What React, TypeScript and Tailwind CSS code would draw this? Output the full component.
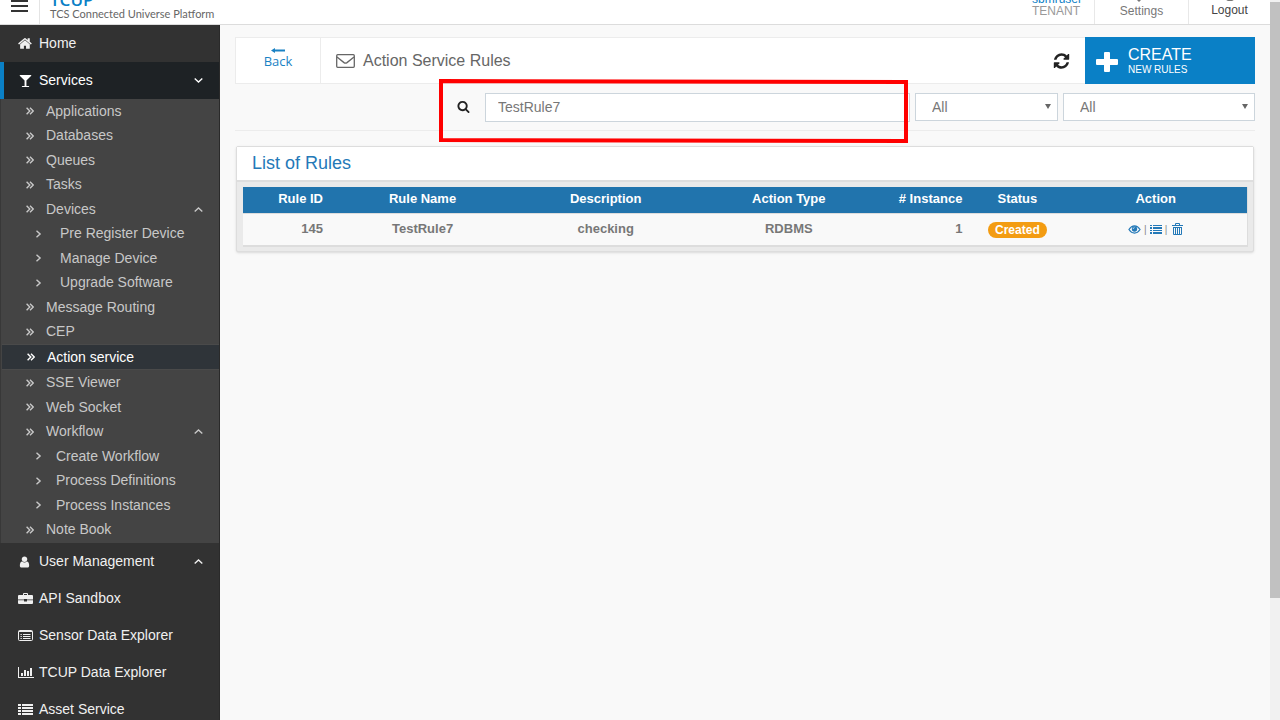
import React from "react";
import clsx from "clsx";

// Font Awesome 4 outlines, all on the 1792 grid
const HOME =
  "M1408 992v480q0 26-19 45t-45 19h-384v-384h-256v384h-384q-26 0-45-19t-19-45v-480q0-1 .5-3t.5-3l575-474 575 474q1 2 1 6zm223-69l-62 74q-8 9-21 11h-3q-13 0-21-7l-692-577-692 577q-12 8-24 7-13-2-21-11l-62-74q-8-10-7-23.5t11-21.5l719-599q32-26 76-26t76 26l244 204v-195q0-14 9-23t23-9h192q14 0 23 9t9 23v408l219 182q10 8 11 21.5t-7 23.5z";
const GLASS =
  "M1699 186q0 35-43 78l-632 632v768h320q26 0 45 19t19 45-19 45-45 19h-896q-26 0-45-19t-19-45 19-45 45-19h320v-768l-632-632q-43-43-43-78 0-23 18-36.5t38-17.5 43-4h1408q23 0 43 4t38 17.5 18 36.5z";
const USER =
  "M1536 1399q0 109-62.5 187t-150.5 78h-854q-88 0-150.5-78t-62.5-187q0-85 8.5-160.5t31.5-152 58.5-131 94-89 134.5-34.5q131 128 313 128t313-128q76 0 134.5 34.5t94 89 58.5 131 31.5 152 8.5 160.5zm-256-887q0 159-112.5 271.5t-271.5 112.5-271.5-112.5-112.5-271.5 112.5-271.5 271.5-112.5 271.5 112.5 112.5 271.5z";
const REFRESH =
  "M1639 1056q0 5-1 7-64 268-268 434.5t-478 166.5q-146 0-282.5-55t-243.5-157l-129 129q-19 19-45 19t-45-19-19-45v-448q0-26 19-45t45-19h448q26 0 45 19t19 45-19 45l-137 137q71 66 161 102t187 36q134 0 250-65t186-179q11-17 53-117 8-23 30-23h192q13 0 22.5 9.5t9.5 22.5zm25-800v448q0 26-19 45t-45 19h-448q-26 0-45-19t-19-45 19-45l138-138q-148-137-349-137-134 0-250 65t-186 179q-11 17-53 117-8 23-30 23h-199q-13 0-22.5-9.5t-9.5-22.5v-7q65-268 270-434.5t480-166.5q146 0 284 55.5t245 156.5l130-129q19-19 45-19t45 19 19 45z";
const SEARCH =
  "M1216 832q0-185-131.5-316.5t-316.5-131.5-316.5 131.5-131.5 316.5 131.5 316.5 316.5 131.5 316.5-131.5 131.5-316.5zm512 832q0 52-38 90t-90 38q-54 0-90-38l-343-342q-179 124-399 124-143 0-273.5-55.5t-225-150-150-225-55.5-273.5 55.5-273.5 150-225 225-150 273.5-55.5 273.5 55.5 225 150 150 225 55.5 273.5q0 220-124 399l343 343q37 37 37 90z";

function Fa({ d, className }: { d: string; className?: string }) {
  return (
    <svg viewBox="0 0 1792 1792" fill="currentColor" className={className} aria-hidden="true">
      <path d={d} />
    </svg>
  );
}

function Chevron({ up }: { up?: boolean }) {
  return (
    <svg viewBox="0 0 9 5" fill="none" stroke="currentColor" strokeWidth="1.4" className="w-[9px] h-[5px]" aria-hidden="true">
      <path d={up ? "M.7 4.4 4.5 1l3.8 3.4" : "M.7.6 4.5 4 8.3.6"} />
    </svg>
  );
}

function ListIcon({ className }: { className?: string }) {
  return (
    <svg viewBox="0 0 15 11" fill="currentColor" className={className} aria-hidden="true">
      <path d="M0 0h3v2H0zM4 0h11v2H4zM0 3h3v2H0zM4 3h11v2H4zM0 6h3v2H0zM4 6h11v2H4zM0 9h3v2H0zM4 9h11v2H4z" />
    </svg>
  );
}

const serviceItems = [
  { label: "Applications" },
  { label: "Databases" },
  { label: "Queues" },
  { label: "Tasks" },
  { label: "Devices", open: true },
  { label: "Pre Register Device", pad: "gap-[18px]" },
  { label: "Manage Device", pad: "gap-[18px]" },
  { label: "Upgrade Software", pad: "gap-[18px]" },
  { label: "Message Routing" },
  { label: "CEP" },
  { label: "Action service", active: true },
  { label: "SSE Viewer" },
  { label: "Web Socket" },
  { label: "Workflow", open: true },
  { label: "Create Workflow", pad: "gap-[14px]" },
  { label: "Process Definitions", pad: "gap-[14px]" },
  { label: "Process Instances", pad: "gap-[14px]" },
  { label: "Note Book" },
];

const bottomItems = [
  { label: "User Management", open: true, icon: <Fa d={USER} className="w-[13px] h-[14px]" /> },
  {
    label: "API Sandbox",
    icon: (
      <svg viewBox="0 0 15 12" className="w-[15px] h-3" aria-hidden="true">
        <path fill="currentColor" fillRule="evenodd" d="M5 2V1q0-1 1-1h3q1 0 1 1v1h4q1 0 1 1v3.5H9V6H6v.5H0V3q0-1 1-1zM6 1v1h3V1zM0 7.3h6V8.6h3V7.3h6V10q0 1-1 1H1q-1 0-1-1z" />
      </svg>
    ),
  },
  {
    label: "Sensor Data Explorer",
    icon: (
      <svg viewBox="0 0 15 11" fill="none" stroke="currentColor" className="w-[15px] h-[11px]" aria-hidden="true">
        <rect x=".5" y=".5" width="14" height="10" rx="1" />
        <path d="M1 1.5h13M2.5 4.5h1.3M2.5 6.5h1.3M2.5 8.5h1.3M5 4.5h7.5M5 6.5h7.5M5 8.5h7.5" />
      </svg>
    ),
  },
  {
    label: "TCUP Data Explorer",
    icon: (
      <svg viewBox="0 0 16 11" fill="currentColor" className="w-4 h-[11px]" aria-hidden="true">
        <path d="M0 0h1v10h15v1H0zM3 6h2v3H3zM6 3h2v6H6zM9 4h2v5H9zM12 1h2v8h-2z" />
      </svg>
    ),
  },
  { label: "Asset Service", icon: <ListIcon className="w-[15px] h-[11px]" /> },
];

function Header() {
  return (
    <header className="relative z-10 flex items-end justify-between h-[25px] shrink-0 overflow-hidden bg-white border-b border-[#dcdcdc]">
      <div className="flex items-end h-full">
        <button aria-label="Toggle menu" className="flex items-start justify-center w-[39px] h-full">
          <svg viewBox="0 0 17 12" className="w-[17px] h-3" aria-hidden="true">
            <path d="M0 1h17M0 6h17M0 11h17" stroke="#333" strokeWidth="2" />
          </svg>
        </button>
        <a href="#" className="flex flex-col justify-end h-full pl-[10px] pb-1 border-l border-[#e4e4e4]">
          <span className="text-[17px] leading-4 font-semibold text-[#0a80c6] font-['Open_Sans',sans-serif]">TCUP</span>
          <span className="text-[11px] leading-3 text-[#666] font-[Lato,sans-serif]">TCS Connected Universe Platform</span>
        </a>
      </div>
      <nav className="flex h-full text-[12px] leading-3">
        <a href="#" className="flex flex-col justify-end pr-3 pb-[7px] text-[#999]">
          <span className="text-[#0a80c6]">sbmruser</span>
          <span>TENANT</span>
        </a>
        <a href="#" className="flex flex-col items-center justify-end w-[94px] pb-[7px] border-l border-[#e8e8e8] text-[#777]">
          <svg viewBox="0 0 12 12" className="w-3 h-3 shrink-0 mb-[3px]" aria-hidden="true">
            <path d="M10 1 7 4l2 2 2-2c1 3-1 5-4 4L3 12 1 10l4-4C4 3 6 1 10 1z" fill="currentColor" />
          </svg>
          <span>Settings</span>
        </a>
        <a href="#" className="flex flex-col items-center justify-end w-[82px] pb-2 border-l border-[#e8e8e8] text-[#444]">
          <svg viewBox="0 0 12 12" fill="none" stroke="#777" strokeWidth="2" className="w-3 h-3 shrink-0 mb-[3px]" aria-hidden="true">
            <path d="M3.5 2a5 5 0 1 0 5 0M6 0v5" />
          </svg>
          <span>Logout</span>
        </a>
      </nav>
    </header>
  );
}

function Sidebar() {
  return (
    <aside className="w-[220px] shrink-0 overflow-hidden bg-[#323232] border-r border-[#2a2a2a] text-[14px] text-[#f0f0f0]">
      <a href="#" className="flex items-center gap-[6px] h-[37px] pl-[18px]">
        <Fa d={HOME} className="w-[15px] h-[15px]" />
        Home
      </a>
      <a href="#" className="flex items-center gap-[6px] h-[37px] pl-[14px] pr-4 border-l-4 border-[#0a80c6] bg-[#1e2225] text-white">
        <Fa d={GLASS} className="w-[15px] h-[13px]" />
        <span className="flex-1">Services</span>
        <Chevron />
      </a>
      <ul className="pb-px bg-[#444] border-l border-[#383838] text-[#c8c8c8]">
        {serviceItems.map((item) => (
          <li
            key={item.label}
            className={clsx(
              item.active ? "h-[26px] ml-px bg-[#2f3439] border-y border-[#4a4a4a] text-white" : "odd:h-6 even:h-[25px]"
            )}
          >
            <a href="#" className={clsx("flex items-center h-full pr-4", item.pad ? ["pl-[34px]", item.pad] : "pl-[25px] gap-3")}>
              {item.pad ? (
                <svg viewBox="0 0 7 8" fill="none" stroke="currentColor" strokeWidth="1.4" className="w-[7px] h-2" aria-hidden="true">
                  <path d="m1.5.8 3.6 3.2-3.6 3.2" />
                </svg>
              ) : (
                <svg viewBox="0 0 8 8" fill="none" stroke="currentColor" strokeWidth="1.4" className="w-2 h-2" aria-hidden="true">
                  <path d="m.6.8 3.2 3.2L.6 7.2M4 .8l3.2 3.2L4 7.2" />
                </svg>
              )}
              <span className="flex-1">{item.label}</span>
              {item.open && <Chevron up />}
            </a>
          </li>
        ))}
      </ul>
      {bottomItems.map((item) => (
        <a key={item.label} href="#" className="flex items-center gap-[5px] h-[37px] pl-[18px] pr-4">
          <span className="w-4">{item.icon}</span>
          <span className="flex-1">{item.label}</span>
          {item.open && <Chevron up />}
        </a>
      ))}
    </aside>
  );
}

function FilterSelect({ label, className }: { label: string; className: string }) {
  return (
    <div className={clsx("relative", className)}>
      <select aria-label={label} className="appearance-none w-full h-7 px-4 bg-white border border-[#ccd5dc] text-[14px] text-[#777]">
        <option>All</option>
      </select>
      <svg viewBox="0 0 6 5" className="absolute right-[7px] top-[11px] w-[6px] h-[5px] pointer-events-none" aria-hidden="true">
        <path d="M0 0h6L3 5z" fill="#666" />
      </svg>
    </div>
  );
}

function RulesTable() {
  return (
    <section className="mx-px mt-[15px] bg-[#eaeaea] border border-[#ddd] rounded-[2px] shadow-sm">
      <h2 className="h-[35px] px-[15px] bg-white border-b-2 border-[#dedede] text-[18px] leading-8 text-[#2479b8]">List of Rules</h2>
      <div className="p-[5px] pl-[6px] pb-1">
        <table className="w-full table-fixed bg-[#f9f9f9] border-r border-b-2 border-[#ddd] text-[13px] font-bold text-center text-[#777]">
          <thead className="bg-[#2174ad] text-white">
            <tr className="h-[26px] *:pb-[2px]">
              <th className="w-[88px] pr-2 text-right">Rule ID</th>
              <th>Rule Name</th>
              <th>Description</th>
              <th>Action Type</th>
              <th className="w-[90px] pr-2 text-right">#&nbsp;Instance</th>
              <th className="w-[94px]">Status</th>
              <th>Action</th>
            </tr>
          </thead>
          <tbody>
            <tr className="h-[33px] border-t border-[#ddd]">
              <td className="pr-2 pb-[2px] text-right">145</td>
              <td className="pb-[2px]">TestRule7</td>
              <td className="pb-[2px]">checking</td>
              <td className="pb-[2px]">RDBMS</td>
              <td className="pr-2 pb-[2px] text-right">1</td>
              <td>
                <span className="inline-block px-[7px] rounded-full bg-[#f39c12] text-[12px] leading-4 text-white">Created</span>
              </td>
              <td>
                <div className="flex items-center justify-center gap-[3px] text-[#2479b8]">
                  <button aria-label="View rule">
                    <svg viewBox="0 0 14 10" className="w-[13px] h-[9px]" aria-hidden="true">
                      <path d="M.8 5Q3.5 1 7 1t6.2 4Q10.5 9 7 9T.8 5z" fill="none" stroke="currentColor" strokeWidth="1.3" />
                      <circle cx="7" cy="4.5" r="3" fill="currentColor" />
                      <path d="M5.5 4.3Q5.6 3 7 2.9" fill="none" stroke="#fff" strokeWidth=".8" />
                    </svg>
                  </button>
                  <span className="text-[10px] font-normal text-[#888]">|</span>
                  <button aria-label="Rule details">
                    <svg viewBox="0 0 12 9" fill="currentColor" className="w-3 h-[9px]" aria-hidden="true">
                      <path d="M0 0h2v1H0zM3 0h9v1H3zM0 2h2v2H0zM3 2h9v2H3zM0 5h2v1H0zM3 5h9v1H3zM0 7h2v2H0zM3 7h9v2H3z" />
                    </svg>
                  </button>
                  <span className="text-[10px] font-normal text-[#888]">|</span>
                  <button aria-label="Delete rule" className="pl-[2px]">
                    <svg viewBox="0 0 11 12" fill="none" stroke="currentColor" className="w-[11px] h-3" aria-hidden="true">
                      <path d="M0 2.5h11M3.5 2V.5h4V2M1.500 4v7.500h8V4M1 4.500h9M3.500 5v6M5.500 5v6M7.500 5v6" />
                    </svg>
                  </button>
                </div>
              </td>
            </tr>
          </tbody>
        </table>
      </div>
    </section>
  );
}

export default function App() {
  return (
    <div className="flex h-screen overflow-hidden bg-[#f9f9f9] font-['Liberation_Sans',Arial,sans-serif]">
      <div className="flex flex-col flex-1 min-w-0">
        <Header />
        <div className="flex flex-1 min-h-0">
          <Sidebar />
          <main className="flex-1 min-w-0 px-[15px] pt-3">
            {/* title bar */}
            <div className="flex h-[47px]">
              <div className="flex flex-1 items-center bg-white border border-r-0 border-[#ececec]">
                <a href="#" className="flex flex-col items-center justify-center w-[85px] h-full pb-1 border-r border-[#ececec] font-['Open_Sans',sans-serif] text-[13px] leading-4 text-[#1a82c4]">
                  <svg viewBox="0 0 14 5" className="w-[14px] h-[5px]" aria-hidden="true">
                    <path d="M0 2.500 4 0v1.500h10v2H4V5z" fill="currentColor" />
                  </svg>
                  Back
                </a>
                <svg viewBox="0 0 19 14" fill="none" stroke="#666" strokeWidth="1.3" className="w-[19px] h-[14px] ml-[15px]" aria-hidden="true">
                  <rect x=".7" y=".7" width="17.6" height="12.6" rx="1" />
                  <path d="M1 3q5 4 7 5.600 1.500 1 3 0Q13 7 18 3" />
                </svg>
                <h1 className="flex-1 pl-2 text-[16px] text-[#666]">Action Service Rules</h1>
                <button aria-label="Refresh" className="mr-[14px] text-[#222]">
                  <Fa d={REFRESH} className="w-[19px] h-[18px]" />
                </button>
              </div>
              <button className="flex items-center gap-[10px] w-[170px] h-[47px] pl-[11px] bg-[#0a80c6] text-white text-left">
                <svg viewBox="0 0 22 20" className="w-[22px] h-5 mt-[3px]" aria-hidden="true">
                  <path d="M8 1q0-1 1-1h4q1 0 1 1v6h7q1 0 1 1v4q0 1-1 1h-7v6q0 1-1 1H9q-1 0-1-1v-6H1q-1 0-1-1V8q0-1 1-1h7z" fill="currentColor" />
                </svg>
                <span className="flex flex-col">
                  <span className="text-[16px] leading-[18px]">CREATE</span>
                  <span className="text-[10px] leading-3">NEW RULES</span>
                </span>
              </button>
            </div>

            {/* filters */}
            <div className="flex gap-[5px] h-[47px] pt-[9px] border-b border-[#ececec]">
              <div className="relative flex ml-[20%] flex-1">
                <label htmlFor="rule-search" className="w-[46px] pl-[18px] pt-[7px] text-[#222]">
                  <Fa d={SEARCH} className="w-[13px] h-[13px]" />
                  <span className="sr-only">Search rules</span>
                </label>
                <input id="rule-search" type="text" defaultValue="TestRule7" className="flex-1 min-w-0 h-[29px] px-3 pb-px bg-white border border-[#ccd5dc] text-[14px] text-[#777]" />
                <svg viewBox="0 0 469 66" preserveAspectRatio="none" className="absolute left-0 -top-[15px] w-full h-[66px] pr-[2px] pointer-events-none" aria-hidden="true">
                  <path d="M2 3 467 4v59L2 62z" fill="none" stroke="#f00" strokeWidth="4" />
                </svg>
              </div>
              <FilterSelect label="Action type" className="w-[143px]" />
              <FilterSelect label="Status" className="w-[192px]" />
            </div>

            <RulesTable />
          </main>
        </div>
      </div>
      {/* scroll track */}
      <div className="w-[10px] shrink-0 pt-[2px] bg-[#f1f1f1]">
        <div className="h-[83%] bg-[#c1c1c1]"></div>
      </div>
    </div>
  );
}
